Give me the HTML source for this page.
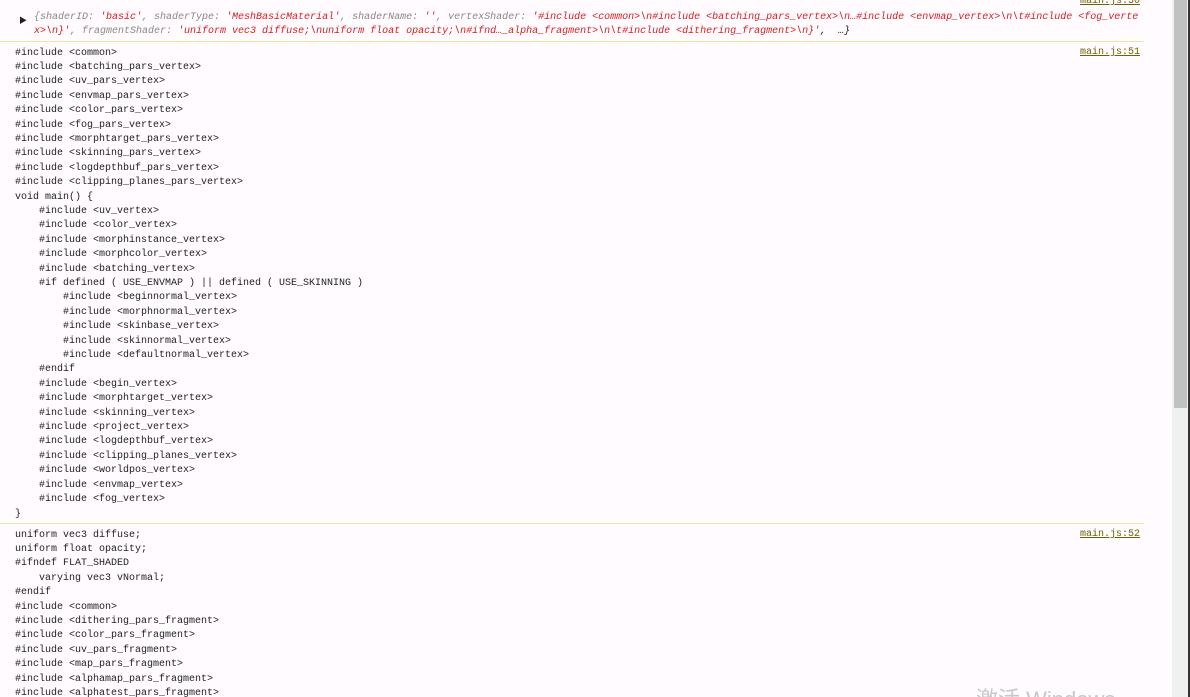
<!DOCTYPE html>
<html><head><meta charset="utf-8"><style>
html,body{margin:0;padding:0;width:1190px;height:697px;overflow:hidden;}
body{background:#fffbff;position:relative;font-family:"Liberation Mono","Noto Sans CJK SC",monospace;font-size:10px;color:#222;}
pre{position:absolute;left:15px;margin:0;font-family:inherit;font-size:10px;line-height:14.4px;white-space:pre;}
.hr{position:absolute;left:0;width:1144px;height:1px;background:#ece6a0;}
.lnk{position:absolute;right:50px;color:#6b6300;text-decoration:underline;font-size:10px;line-height:14.4px;}
.g{color:#888;font-style:italic}
.r{color:#d42020;font-style:italic}
.k{color:#222;font-style:italic}
.sb{position:absolute;left:1172px;top:0;width:16px;height:697px;background:#f0f0f0;}
.th{position:absolute;left:1174px;top:0;width:13px;height:408px;background:#c1c1c1;}
.edge{position:absolute;left:1188px;top:0;width:2px;height:697px;background:#333;}
</style></head><body>
<div class="lnk" style="top:-5px">main.js:50</div>
<div style="position:absolute;left:19px;top:15px;font-size:8px;">&#9654;</div>
<pre style="left:34px;top:10.5px"><span class="g">{shaderID: </span><span class="r">'basic'</span><span class="g">, shaderType: </span><span class="r">'MeshBasicMaterial'</span><span class="g">, shaderName: </span><span class="r">''</span><span class="g">, vertexShader: </span><span class="r">'#include &lt;common&gt;\n#include &lt;batching_pars_vertex&gt;\n…#include &lt;envmap_vertex&gt;\n\t#include &lt;fog_verte</span>
<span class="r">x&gt;\n}'</span><span class="g">, fragmentShader: </span><span class="r">'uniform vec3 diffuse;\nuniform float opacity;\n#ifnd…_alpha_fragment&gt;\n\t#include &lt;dithering_fragment&gt;\n}'</span><span class="k">,  …}</span></pre>
<div class="hr" style="top:41px"></div>
<div class="lnk" style="top:46px">main.js:51</div>
<pre style="top:46.5px">#include &lt;common&gt;
#include &lt;batching_pars_vertex&gt;
#include &lt;uv_pars_vertex&gt;
#include &lt;envmap_pars_vertex&gt;
#include &lt;color_pars_vertex&gt;
#include &lt;fog_pars_vertex&gt;
#include &lt;morphtarget_pars_vertex&gt;
#include &lt;skinning_pars_vertex&gt;
#include &lt;logdepthbuf_pars_vertex&gt;
#include &lt;clipping_planes_pars_vertex&gt;
void main() {
    #include &lt;uv_vertex&gt;
    #include &lt;color_vertex&gt;
    #include &lt;morphinstance_vertex&gt;
    #include &lt;morphcolor_vertex&gt;
    #include &lt;batching_vertex&gt;
    #if defined ( USE_ENVMAP ) || defined ( USE_SKINNING )
        #include &lt;beginnormal_vertex&gt;
        #include &lt;morphnormal_vertex&gt;
        #include &lt;skinbase_vertex&gt;
        #include &lt;skinnormal_vertex&gt;
        #include &lt;defaultnormal_vertex&gt;
    #endif
    #include &lt;begin_vertex&gt;
    #include &lt;morphtarget_vertex&gt;
    #include &lt;skinning_vertex&gt;
    #include &lt;project_vertex&gt;
    #include &lt;logdepthbuf_vertex&gt;
    #include &lt;clipping_planes_vertex&gt;
    #include &lt;worldpos_vertex&gt;
    #include &lt;envmap_vertex&gt;
    #include &lt;fog_vertex&gt;
}</pre>
<div class="hr" style="top:523px"></div>
<div class="lnk" style="top:528px">main.js:52</div>
<pre style="top:528.5px">uniform vec3 diffuse;
uniform float opacity;
#ifndef FLAT_SHADED
    varying vec3 vNormal;
#endif
#include &lt;common&gt;
#include &lt;dithering_pars_fragment&gt;
#include &lt;color_pars_fragment&gt;
#include &lt;uv_pars_fragment&gt;
#include &lt;map_pars_fragment&gt;
#include &lt;alphamap_pars_fragment&gt;
#include &lt;alphatest_pars_fragment&gt;</pre>
<div style="position:absolute;left:976px;top:688px;font-family:'Liberation Sans','Noto Sans CJK SC',sans-serif;font-size:22px;line-height:24px;color:#c8c8c8;">激活 Windows</div>
<div class="sb"></div><div class="th"></div><div class="edge"></div>
</body></html>
